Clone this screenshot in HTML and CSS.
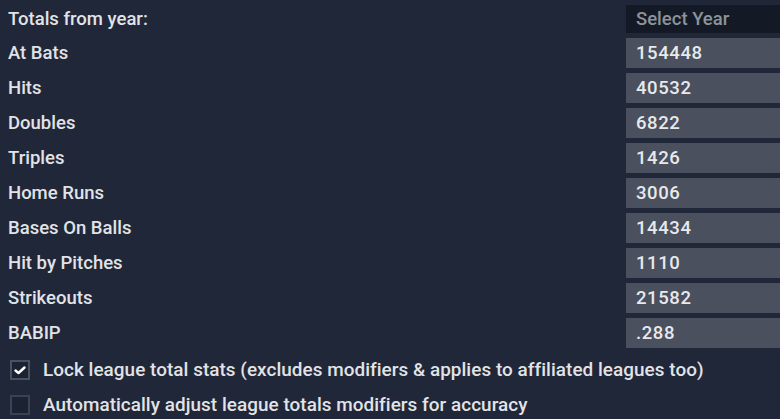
FILE: index.html
```html
<!DOCTYPE html>
<html>
<head>
<meta charset="utf-8">
<link rel="stylesheet" href="styles.css">
</head>
<body>
<div class="panel">
  <div class="row head">
    <div class="label">Totals from year:</div>
    <div class="select">Select Year</div>
  </div>
  <div class="row"><div class="label">At Bats</div><div class="field">154448</div></div>
  <div class="row"><div class="label">Hits</div><div class="field">40532</div></div>
  <div class="row"><div class="label">Doubles</div><div class="field">6822</div></div>
  <div class="row"><div class="label">Triples</div><div class="field">1426</div></div>
  <div class="row"><div class="label">Home Runs</div><div class="field">3006</div></div>
  <div class="row"><div class="label">Bases On Balls</div><div class="field">14434</div></div>
  <div class="row"><div class="label">Hit by Pitches</div><div class="field">1110</div></div>
  <div class="row"><div class="label">Strikeouts</div><div class="field">21582</div></div>
  <div class="row"><div class="label">BABIP</div><div class="field">.288</div></div>
  <div class="checks">
    <div class="check-row">
      <span class="box checked"><svg width="12" height="10" viewBox="0 0 12 10"><path d="M1.5 5.5 L4.5 8 L10.5 2.5" fill="none" stroke="#ffffff" stroke-width="2.4" stroke-linecap="round" stroke-linejoin="round"/></svg></span>
      <span class="check-label">Lock league total stats (excludes modifiers &amp; applies to affiliated leagues too)</span>
    </div>
    <div class="check-row">
      <span class="box"></span>
      <span class="check-label">Automatically adjust league totals modifiers for accuracy</span>
    </div>
  </div>
</div>
</body>
</html>
```

FILE: styles.css
```css
html, body {
  margin: 0;
  padding: 0;
  background: #1f2739;
  width: 780px;
  height: 419px;
  overflow: hidden;
}
body {
  font-family: Roboto, "Liberation Sans", sans-serif;
  color: #e2e3e6;
  font-size: 18.5px;
  font-weight: 500;
}
.panel {
  display: flex;
  flex-direction: column;
  padding-top: 5px;
}
.row {
  display: flex;
  align-items: center;
  justify-content: space-between;
  height: 30px;
  margin-bottom: 5px;
}
.row.head {
  height: 28px;
  margin-bottom: 5px;
}
.label {
  padding-left: 8px;
}
.select {
  width: 144px;
  height: 28px;
  line-height: 28px;
  background: #141a25;
  color: #8d929b;
  padding-left: 10px;
  font-weight: 500;
}
.field {
  width: 144px;
  height: 30px;
  line-height: 30px;
  background: #4a505e;
  color: #e8e9ec;
  padding-left: 10px;
  font-weight: 500;
  letter-spacing: 0.6px;
}
.checks {
  display: flex;
  flex-direction: column;
  margin-top: -1px;
}
.check-row {
  display: flex;
  align-items: center;
  height: 35px;
  padding-left: 10px;
  font-size: 18.9px;
  font-weight: 500;
  letter-spacing: 0.05px;
}
.box {
  width: 16px;
  height: 16px;
  border: 2px solid #3b4253;
  background: #1b2232;
  display: flex;
  align-items: center;
  justify-content: center;
  margin-right: 13px;
  flex: none;
}
.box.checked {
  border-color: #4a5161;
}
```
